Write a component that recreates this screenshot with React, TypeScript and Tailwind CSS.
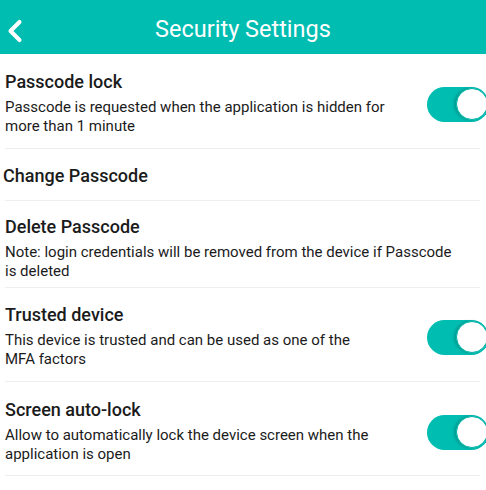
import { ChevronLeft } from 'lucide-react';

type Item = {
  title: string;
  lines?: string[];
  toggle?: boolean;
  pad: string;
  indent?: string;
};

const ITEMS: Item[] = [
  {
    title: 'Passcode lock',
    lines: ['Passcode is requested when the application is hidden for', 'more than 1 minute'],
    toggle: true,
    pad: 'pt-[18px] pb-[12px]',
  },
  { title: 'Change Passcode', pad: 'pt-[17px] pb-[14px]', indent: 'pl-[3px]' },
  {
    title: 'Delete Passcode',
    lines: ['Note: login credentials will be removed from the device if Passcode', 'is deleted'],
    pad: 'pt-[16px] pb-[6px]',
  },
  {
    title: 'Trusted device',
    lines: ['This device is trusted and can be used as one of the', 'MFA factors'],
    toggle: true,
    pad: 'pt-[17px] pb-[12px]',
  },
  {
    title: 'Screen auto-lock',
    lines: ['Allow to automatically lock the device screen when the', 'application is open'],
    toggle: true,
    pad: 'pt-[18px] pb-[11px]',
  },
];

function Toggle() {
  return (
    <div className="relative -mr-[3px] h-[35px] w-[62px] shrink-0 rounded-full bg-[#00bdb1]">
      <div className="absolute right-[1px] top-[1.5px] h-[32px] w-[32px] rounded-full border border-[#00b3a7] bg-white shadow-[-2px_0_3px_rgba(0,0,0,0.18)]" />
    </div>
  );
}

export default function App() {
  return (
    <div className="h-[490px] w-[486px] overflow-hidden bg-white font-['Roboto',sans-serif] text-[#1b1b1b]">
      <header className="relative flex h-[54px] items-center justify-center bg-[#00bdb1] pt-[5px]">
        <ChevronLeft className="absolute -left-[3.5px] top-[13px] h-[36px] w-[36px] text-white" strokeWidth={2.7} />
        <h1 className="text-[23.5px] leading-none text-white">Security Settings</h1>
      </header>

      {ITEMS.map((item) => (
        <div key={item.title}>
          <div className={`flex items-center ${item.indent ?? 'pl-[5px]'} ${item.pad}`}>
            <div className="flex-1">
              <p className="text-[18px] leading-[20px] font-medium">{item.title}</p>
              {item.lines && (
                <p className="mt-[6px] text-[15px] leading-[19px]">
                  {item.lines[0]}
                  <br />
                  {item.lines[1]}
                </p>
              )}
            </div>
            {item.toggle && <Toggle />}
          </div>
          <div className="ml-[5px] mr-[6px] h-px bg-[#eceef0]" />
        </div>
      ))}
    </div>
  );
}
